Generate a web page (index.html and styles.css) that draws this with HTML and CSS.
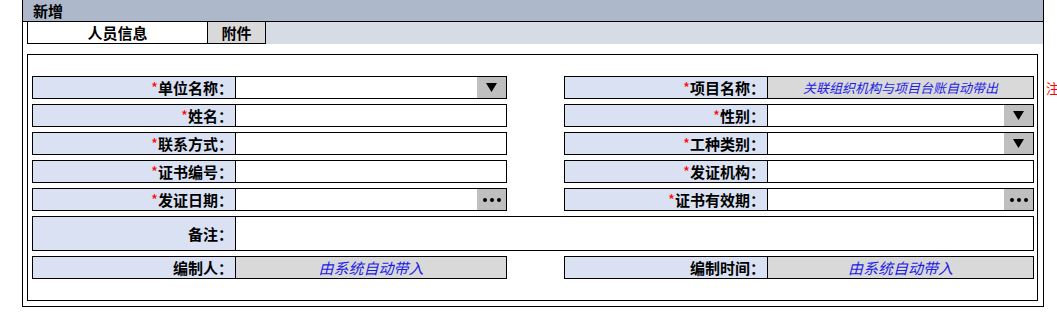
FILE: index.html
```html
<!DOCTYPE html>
<html lang="zh-CN">
<head>
    <meta charset="UTF-8">
    <meta name="viewport" content="width=device-width, initial-scale=1.0">
    <title>新增人员</title>
    <link rel="stylesheet" href="styles.css">
</head>
<body>
    <div class="panel">
        <div class="panel-title">新增</div>

        <!-- 标签页 -->
        <div class="tabs">
            <div class="tab tab-active">人员信息</div>
            <div class="tab">附件</div>
            <div class="tab-fill"></div>
        </div>

        <div class="form-box">
            <div class="form-grid">
                <!-- 第一行 -->
                <div class="field">
                    <div class="field-label"><span class="req">*</span>单位名称：</div>
                    <div class="field-input">
                        <span class="btn-side">
                            <svg width="11" height="9" viewBox="0 0 11 9"><polygon points="0,0 11,0 5.5,9" fill="#000"/></svg>
                        </span>
                    </div>
                </div>
                <div class="cell-note">
                    <div class="field">
                        <div class="field-label"><span class="req">*</span>项目名称：</div>
                        <div class="field-input readonly small">关联组织机构与项目台账自动带出</div>
                    </div>
                    <span class="note">注</span>
                </div>

                <!-- 第二行 -->
                <div class="field">
                    <div class="field-label"><span class="req">*</span>姓名：</div>
                    <div class="field-input"></div>
                </div>
                <div class="field">
                    <div class="field-label"><span class="req">*</span>性别：</div>
                    <div class="field-input">
                        <span class="btn-side">
                            <svg width="11" height="9" viewBox="0 0 11 9"><polygon points="0,0 11,0 5.5,9" fill="#000"/></svg>
                        </span>
                    </div>
                </div>

                <!-- 第三行 -->
                <div class="field">
                    <div class="field-label"><span class="req">*</span>联系方式：</div>
                    <div class="field-input"></div>
                </div>
                <div class="field">
                    <div class="field-label"><span class="req">*</span>工种类别：</div>
                    <div class="field-input">
                        <span class="btn-side">
                            <svg width="11" height="9" viewBox="0 0 11 9"><polygon points="0,0 11,0 5.5,9" fill="#000"/></svg>
                        </span>
                    </div>
                </div>

                <!-- 第四行 -->
                <div class="field">
                    <div class="field-label"><span class="req">*</span>证书编号：</div>
                    <div class="field-input"></div>
                </div>
                <div class="field">
                    <div class="field-label"><span class="req">*</span>发证机构：</div>
                    <div class="field-input"></div>
                </div>

                <!-- 第五行 -->
                <div class="field">
                    <div class="field-label"><span class="req">*</span>发证日期：</div>
                    <div class="field-input">
                        <span class="btn-side">
                            <svg width="18" height="4" viewBox="0 0 18 4"><circle cx="2" cy="2" r="2" fill="#000"/><circle cx="9" cy="2" r="2" fill="#000"/><circle cx="16" cy="2" r="2" fill="#000"/></svg>
                        </span>
                    </div>
                </div>
                <div class="field">
                    <div class="field-label"><span class="req">*</span>证书有效期：</div>
                    <div class="field-input">
                        <span class="btn-side">
                            <svg width="18" height="4" viewBox="0 0 18 4"><circle cx="2" cy="2" r="2" fill="#000"/><circle cx="9" cy="2" r="2" fill="#000"/><circle cx="16" cy="2" r="2" fill="#000"/></svg>
                        </span>
                    </div>
                </div>

                <!-- 备注 -->
                <div class="field field-wide">
                    <div class="field-label">备注：</div>
                    <div class="field-input"></div>
                </div>

                <!-- 编制信息 -->
                <div class="field">
                    <div class="field-label">编制人：</div>
                    <div class="field-input readonly">由系统自动带入</div>
                </div>
                <div class="field">
                    <div class="field-label">编制时间：</div>
                    <div class="field-input readonly">由系统自动带入</div>
                </div>
            </div>
        </div>
    </div>
</body>
</html>
```

FILE: styles.css
```css
html, body {
    margin: 0;
    overflow: hidden;
    background: #fff;
    font-family: "Noto Sans CJK SC", "DejaVu Sans", sans-serif;
    color: #000;
}

/* 外框 */
.panel {
    box-sizing: border-box;
    width: 1022px;
    height: 307px;
    margin-left: 22px;
    border: 1px solid #000;
    border-top: none;
}

.panel-title {
    height: 21px;
    line-height: 21px;
    padding-left: 10px;
    background: #adb9ca;
    border-bottom: 1px solid #000;
    font-size: 15px;
    font-weight: bold;
}

/* 标签页 */
.tabs {
    display: flex;
    height: 22px;
    padding-left: 4px;
}

.tab {
    box-sizing: border-box;
    height: 22px;
    line-height: 21px;
    text-align: center;
    font-size: 15px;
    font-weight: bold;
    border: 1px solid #000;
    border-top: none;
    border-left: none;
    width: 58px;
    background: #d9d9d9;
}

.tab-active {
    width: 181px;
    border-left: 1px solid #000;
    background: #fff;
}

.tab-fill {
    flex: 1;
    background: #d6dce4;
}

/* 表单区域 */
.form-box {
    box-sizing: border-box;
    width: 1011px;
    height: 247px;
    margin: 10px 0 0 4px;
    padding: 21px 3px 21px 4px;
    border: 1px solid #000;
}

.form-grid {
    display: grid;
    grid-template-columns: 475px 470px;
    grid-template-rows: repeat(5, 23px) 35px 23px;
    column-gap: 57px;
    row-gap: 5px;
}

.field {
    box-sizing: border-box;
    display: flex;
    height: 100%;
    border: 1px solid #000;
}

.field-wide {
    grid-column: 1 / -1;
}

.field-label {
    flex-shrink: 0;
    display: flex;
    align-items: center;
    justify-content: flex-end;
    box-sizing: border-box;
    width: 203px;
    padding-right: 2px;
    background: #d9e1f2;
    border-right: 1px solid #000;
    font-size: 15px;
    font-weight: bold;
    line-height: 1;
}

.req {
    color: #ff0000;
    font-weight: normal;
}

.field-input {
    flex: 1;
    display: flex;
    justify-content: flex-end;
    background: #fff;
}

.readonly {
    justify-content: center;
    align-items: center;
    background: #d9d9d9;
    color: #1c1ce6;
    font-style: italic;
    font-size: 15px;
    line-height: 1;
}

.small {
    font-size: 13px;
}

.btn-side {
    display: flex;
    align-items: center;
    justify-content: center;
    width: 29px;
    background: #bfbfbf;
}

/* 项目名称右侧提示 */
.cell-note {
    display: flex;
    align-items: center;
}

.cell-note .field {
    flex-shrink: 0;
    width: 100%;
}

.note {
    flex-shrink: 0;
    margin-left: 12px;
    color: #ff0000;
    font-size: 13px;
    line-height: 1;
}
```
